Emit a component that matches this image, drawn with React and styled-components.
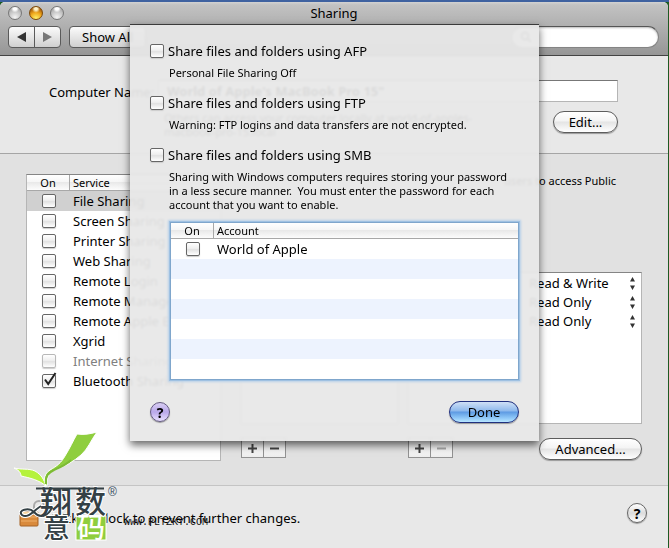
import React from 'react';
import styled, { createGlobalStyle, css } from 'styled-components';

const Global = createGlobalStyle`
  * { box-sizing: border-box; }
  body { margin: 0; background: #1d5a22; }
  body, button, input, select {
    font-family: "Lucida Grande", "Noto Sans", "Open Sans", sans-serif;
    font-size: 13px;
    color: #000;
  }
`;

const Desktop = styled.div`
  position: relative;
  min-height: 100vh;
  display: flex;
  border-top: 2px solid #3f62a0;
  padding-right: 1px;
  overflow: hidden;
`;

const Window = styled.main`
  position: relative;
  flex: 1;
  min-width: 0;
  display: flex;
  flex-direction: column;
  background: #e8e8e8;
  border-radius: 5px 5px 0 0;
  overflow: hidden;
`;

const Chrome = styled.header`
  background: linear-gradient(#d2d2d2, #c2c2c2 3px, #969696);
  border-bottom: 1px solid #434343;
  height: 54px;
`;

const TitleBar = styled.div`
  display: grid;
  grid-template-columns: 1fr auto 1fr;
  align-items: center;
  height: 22px;
  padding: 0 8px;
`;

const Title = styled.h1`
  margin: 0;
  font-size: 13px;
  line-height: 20px;
  font-weight: 400;
`;

const Lights = styled.div`
  display: flex;
  gap: 7px;
`;

const Light = styled.button`
  width: 14px;
  height: 14px;
  padding: 0;
  border: 1px solid ${p => (p.$amber ? '#7d4a08' : '#777')};
  border-radius: 50%;
  background: ${p => p.$amber
    ? 'radial-gradient(circle at 50% 15%, #fff3c8 0 12%, transparent 34%), radial-gradient(circle at 50% 95%, #fff36b, #f0a81c 45%, #8f4507 90%)'
    : 'radial-gradient(circle at 50% 12%, #fff 0 14%, transparent 34%), radial-gradient(circle at 50% 85%, #f4f4f4, #bdbdbd 60%, #8a8a8a)'};
`;

const Toolbar = styled.div`
  display: flex;
  align-items: center;
  padding: 2px 9px 0 8px;
  gap: 8px;
`;

const toolFace = css`
  height: 22px;
  border: 1px solid #5a5a5a;
  background: linear-gradient(#fbfbfb, #e6e6e6 50%, #d0d0d0);
`;

const NavGroup = styled.div`
  display: flex;
`;

const NavButton = styled.button`
  ${toolFace}
  width: 27px;
  padding: 0;
  display: flex;
  align-items: center;
  justify-content: center;
  border-radius: ${p => (p.$end ? '0 4px 4px 0' : '4px 0 0 4px')};
  margin-left: ${p => (p.$end ? '-1px' : '0')};
`;

const ToolButton = styled.button`
  ${toolFace}
  border-radius: 4px;
  padding: 0 12px;
  line-height: 18px;
`;

const SearchBox = styled.label`
  margin-left: auto;
  width: 148px;
  height: 22px;
  display: flex;
  align-items: center;
  gap: 4px;
  padding: 0 8px;
  border-radius: 11px;
  border: 1px solid #848484;
  border-top-color: #555;
  background: #fff;
  box-shadow: inset 0 1px 2px #bbb;
`;

const SearchInput = styled.input`
  min-width: 0;
  flex: 1;
  border: 0;
  background: transparent;
  outline: none;
`;

const NameSection = styled.section`
  display: grid;
  grid-template-columns: 104px 1fr;
  column-gap: 5px;
  padding: 24px 50px 14px 49px;
  border-bottom: 1px solid #a5a5a5;
`;

const NameLabel = styled.label`
  line-height: 24px;
  white-space: nowrap;
`;

const NameInput = styled.input`
  height: 22px;
  min-width: 0;
  padding: 0 8px;
  border: 1px solid #b5b5b5;
  border-top-color: #777;
  border-radius: 0;
  background: #fff;
  font-weight: 700;
`;

const NameHelp = styled.div`
  grid-column: 2;
  display: flex;
  justify-content: space-between;
  align-items: flex-start;
  padding-top: 7px;
  padding-left: 6px;
`;

const Note = styled.p`
  margin: 0;
  font-size: 11px;
  line-height: 14px;
  white-space: pre-wrap;
`;

const AccessNote = styled(Note)`
  text-align: right;
  padding-right: 26px;
`;

const Pill = styled.button`
  flex: none;
  height: 22px;
  min-width: ${p => p.$width || '65px'};
  padding: 0 8px;
  line-height: 18px;
  border-radius: 11px;
  border: 1px solid ${p => (p.$primary ? '#20307e' : '#5d5d5d')};
  box-shadow: 0 1px 1px #9a9a9a;
  background: ${p => p.$primary
    ? 'linear-gradient(#cfe0f6, #8db8ec 45%, #5d9ae3 50%, #8fc8f8 80%, #b8e6ff)'
    : 'linear-gradient(#fff, #f4f4f4 45%, #e4e4e4 50%, #fff)'};
`;

const ServiceSection = styled.section`
  display: grid;
  grid-template-columns: 195px 1fr;
  column-gap: 20px;
  padding: 20px 26px 24px;
  background: #e1e1e1;
  border-bottom: 1px solid #c4c4c4;
`;

const Panel = styled.div`
  background: #fff;
  border: 1px solid #b5b5b5;
  border-top-color: #858585;
  min-height: ${p => p.$height};
`;

const Table = styled.table`
  width: 100%;
  border-collapse: separate;
  border-spacing: 0;
  table-layout: fixed;
`;

const HeadCell = styled.th`
  height: 16px;
  padding: 0 0 0 ${p => (p.$narrow ? '0' : '3px')};
  width: ${p => (p.$narrow ? '43px' : 'auto')};
  font-size: 11px;
  line-height: 14px;
  font-weight: 400;
  text-align: ${p => (p.$narrow ? 'center' : 'left')};
  border-bottom: 1px solid #a8a8a8;
  border-right: ${p => (p.$narrow ? '1px solid #a8a8a8' : '0')};
  background: linear-gradient(#fff, #f6f6f6 45%, #e9e9e9 50%, #fcfcfc);
`;

const Row = styled.tr`
  height: 20px;
  background: ${p => (p.$selected ? '#d0d0d0' : p.$tint ? '#edf3fe' : '#fff')};
  color: ${p => (p.$dim ? '#808080' : '#000')};
`;

const Cell = styled.td`
  padding: 0 0 0 ${p => (p.$narrow ? '0' : '3px')};
  height: 20px;
  line-height: ${p => (p.$narrow ? '0' : '18px')};
  text-align: ${p => (p.$narrow ? 'center' : 'left')};
  white-space: nowrap;
`;

const CheckWrap = styled.span`
  display: inline-grid;
  vertical-align: middle;
  > * { grid-area: 1 / 1; }
  svg { pointer-events: none; overflow: visible; display: none; }
  input:checked + svg { display: block; }
`;

const Box = styled.input`
  appearance: none;
  display: block;
  width: 14px;
  height: 14px;
  margin: 0;
  border: 1px solid #666;
  border-radius: 2px;
  background: linear-gradient(#fff, #efefef 45%, #e2e2e2 55%, #fff);
  box-shadow: 0 1px 1px #ccc;
  &:disabled { border-color: #b8b8b8; }
`;

const Detail = styled.div`
  display: flex;
  flex-direction: column;
`;

const Lists = styled.div`
  display: grid;
  grid-template-columns: 157px 1fr;
  column-gap: 10px;
  row-gap: 14px;
  margin-top: 84px;
`;

const Access = styled.ul`
  list-style: none;
  margin: 0;
  padding: 1px 6px 0;
`;

const AccessRow = styled.li`
  display: flex;
  justify-content: flex-end;
  align-items: center;
  height: 19px;
`;

const AccessSelect = styled.select`
  appearance: none;
  width: 101px;
  height: 19px;
  padding: 0;
  border: 0;
  background: transparent;
  line-height: 17px;
`;

const Actions = styled.div`
  display: flex;
  justify-content: space-between;
  align-items: flex-start;
`;

const AddRemove = styled.div`
  display: flex;
`;

const Square = styled.button`
  width: 23px;
  height: 20px;
  padding: 0;
  display: flex;
  align-items: center;
  justify-content: center;
  border: 1px solid #929292;
  background: linear-gradient(#fff, #eee);
  & + & { margin-left: -1px; }
`;

const Footer = styled.footer`
  flex: 1;
  display: flex;
  align-items: flex-start;
  padding: 11px 21px 0 19px;
`;

const LockNote = styled.div`
  display: flex;
  gap: 4px;
  flex: 1;
  line-height: 18px;
  padding-top: 2px;
`;

const LockText = styled.span`
  padding-top: 10px;
`;

const Help = styled.button`
  width: 20px;
  height: 20px;
  margin-top: 6px;
  padding: 0;
  border-radius: 50%;
  border: 1px solid ${p => (p.$violet ? '#635a80' : '#666')};
  background: ${p => (p.$violet
    ? 'linear-gradient(#d8cdf2, #b9a8ea 50%, #e9e0ff)'
    : 'linear-gradient(#fff, #dcdcdc 50%, #fff)')};
  box-shadow: 0 1px 1px #999;
  font-size: 14px;
  line-height: 17px;
  font-weight: 700;
`;

const Sheet = styled.div`
  position: absolute;
  top: 22px;
  left: 0;
  right: 0;
  margin: 0 auto;
  width: 409px;
  max-width: 100%;
  padding: 17px 20px 18px;
  border-top: 1px solid #3a3a3a;
  background: rgba(232, 232, 232, 0.94);
  backdrop-filter: blur(1px);
  box-shadow: 0 4px 8px rgba(0, 0, 0, 0.6);
`;

const Option = styled.div`
  margin-bottom: 14px;
`;

const OptionLabel = styled.label`
  display: flex;
  align-items: center;
  gap: 4px;
  height: 18px;
  line-height: 18px;
`;

const OptionNote = styled(Note)`
  padding: 6px 0 0 19px;
`;

const AccountPanel = styled(Panel)`
  margin: -4px 0 0 20px;
  border-color: #7fa6cc;
  box-shadow: 0 0 0 1px #9fc1e2, 0 0 2px 2px #b7d0ea;
`;

const SheetFooter = styled.div`
  display: flex;
  justify-content: space-between;
  align-items: center;
  margin-top: 21px;
  ${Help} { margin-top: 0; }
`;

const Watermark = styled.div`
  position: absolute;
  left: 14px;
  bottom: 3px;
  width: 200px;
  height: 116px;
  pointer-events: none;
`;

const services = [
  ['File Sharing', { selected: true }],
  ['Screen Sharing', {}],
  ['Printer Sharing', {}],
  ['Web Sharing', {}],
  ['Remote Login', {}],
  ['Remote Management', {}],
  ['Remote Apple Events', {}],
  ['Xgrid', {}],
  ['Internet Sharing', { dim: true }],
  ['Bluetooth Sharing', { checked: true }],
];

const options = [
  ['Share files and folders using AFP', 'Personal File Sharing Off'],
  ['Share files and folders using FTP', 'Warning: FTP logins and data transfers are not encrypted.'],
  ['Share files and folders using SMB', 'Sharing with Windows computers requires storing your password\nin a less secure manner.  You must enter the password for each\naccount that you want to enable.'],
];

const Check = props => (
  <CheckWrap>
    <Box type="checkbox" {...props} />
    <svg width="14" height="14" viewBox="0 0 14 14" fill="none" stroke="#222" strokeWidth="2">
      <path d="M3 5.5 6.2 10 13.5 -1" />
    </svg>
  </CheckWrap>
);

const Updown = () => (
  <svg width="5" height="13" viewBox="0 0 5 13" fill="#333">
    <path d="M2.5 0 5 4.5H0ZM2.5 13 0 8.5H5Z" />
  </svg>
);

const PlusMinus = ({ name, dim }) => (
  <AddRemove>
    <Square aria-label={`Add ${name}`}>
      <svg width="9" height="9" stroke="#444" strokeWidth="2"><path d="M4.5 0V9M0 4.5H9" /></svg>
    </Square>
    <Square aria-label={`Remove ${name}`}>
      <svg width="9" height="9" stroke={dim ? '#aaa' : '#444'} strokeWidth="2"><path d="M0 4.5H9" /></svg>
    </Square>
  </AddRemove>
);

const Lock = () => (
  <svg width="27" height="29" viewBox="0 0 27 29">
    <path d="M15 13V7a5 5 0 0 1 10 0v2" fill="none" stroke="#aaa" strokeWidth="2" />
    <rect x="1" y="13" width="18" height="14" rx="1" fill="#d98a3c" stroke="#a66325" />
    <path d="M2 18H18M2 22H18" stroke="#efb06a" />
    <path d="M1 14H19" stroke="#f8d5a0" strokeWidth="2" />
  </svg>
);

const Brand = () => (
  <svg width="200" height="116" viewBox="14 429 200 116">
    <g stroke="#fff" strokeWidth="1">
      <path d="M45 486C44 479 44 474 50 470C57 466 61 463 65 456C70 448 73 441 77 434C84 435 90 434 97 432C91 440 88 449 81 455C74 461 66 466 57 469C49 472 47 475 47 486Z" fill="#8fce3e" />
      <path d="M14 468C22 470 28 468 35 471C42 475 44 480 46 486C39 480 30 478 21 476C21 472 18 470 14 468Z" fill="#b5f23c" />
    </g>
    <path d="M46 484C45 476 48 473 54 470C61 467 66 465 71 460" fill="none" stroke="#7dbb35" strokeWidth="2" />
    <rect x="76" y="516" width="30" height="24" fill="#8fce3e" stroke="#fff" />
    <path d="M41 506C33 511 28 519 22 515C17 510 29 507 34 512C40 519 49 516 52 507" fill="none" stroke="#fff" strokeWidth="4" />
    <g fontFamily="'Noto Sans CJK SC', sans-serif" fontWeight="500" fill="#344045" stroke="#fff" strokeWidth="2" paintOrder="stroke">
      <text x="40" y="514" fontSize="32">翔</text>
      <text x="75" y="513" fontSize="31">数</text>
      <text x="43" y="538" fontSize="27">意</text>
      <text x="77" y="538" fontSize="28" fill="#fff" stroke="none">码</text>
    </g>
    <path d="M36 488.500H104" stroke="#344045" strokeWidth="2" />
    <path d="M41 506C33 511 28 519 22 515C17 510 29 507 34 512C40 519 49 516 52 507" fill="none" stroke="#344045" strokeWidth="2" />
    <text x="108" y="496" fontFamily="'Liberation Sans', sans-serif" fontSize="12" fill="#344a60">®</text>
    <text x="124" y="525" fontFamily="'Liberation Mono', monospace" fontSize="10" fill="#111">www.PLTZKY.COM</text>
  </svg>
);

export default function App() {
  return (
    <Desktop>
      <Global />
      <Window>
        <Chrome>
          <TitleBar>
            <Lights>
              <Light aria-label="Close" />
              <Light aria-label="Minimize" $amber />
              <Light aria-label="Zoom" />
            </Lights>
            <Title>Sharing</Title>
          </TitleBar>
          <Toolbar>
            <NavGroup>
              <NavButton aria-label="Back">
                <svg width="9" height="10" fill="#333"><path d="M9 0V10L0 5Z" /></svg>
              </NavButton>
              <NavButton aria-label="Forward" $end>
                <svg width="9" height="10" fill="#777"><path d="M0 0V10L9 5Z" /></svg>
              </NavButton>
            </NavGroup>
            <ToolButton>Show All</ToolButton>
            <SearchBox>
              <svg width="12" height="12" fill="none" stroke="#666" strokeWidth="2"><circle cx="5" cy="5" r="3.5" /><path d="m8 8 3 3" /></svg>
              <SearchInput type="search" aria-label="Search" />
            </SearchBox>
          </Toolbar>
        </Chrome>

        <NameSection>
          <NameLabel htmlFor="computer-name">Computer Name:</NameLabel>
          <NameInput id="computer-name" defaultValue={'World of Apple\'s MacBook Pro 15"'} />
          <NameHelp>
            <Note>{'Others can access your computer locally at world-of-apples-\nmacbook-pro-15.local'}</Note>
            <Pill>Edit...</Pill>
          </NameHelp>
        </NameSection>

        <ServiceSection>
          <Panel $height="287px">
            <Table>
              <thead>
                <tr><HeadCell $narrow>On</HeadCell><HeadCell>Service</HeadCell></tr>
              </thead>
              <tbody>
                {services.map(([name, s]) => (
                  <Row key={name} $selected={s.selected} $dim={s.dim}>
                    <Cell $narrow><Check aria-label={name} disabled={s.dim} defaultChecked={s.checked} /></Cell>
                    <Cell>{name}</Cell>
                  </Row>
                ))}
              </tbody>
            </Table>
          </Panel>
          <Detail>
            <AccessNote>users to access Public</AccessNote>
            <Lists>
              <Panel $height="152px" />
              <Panel $height="152px">
                <Access>
                  {['Read & Write', 'Read Only', 'Read Only'].map((v, i) => (
                    <AccessRow key={i}>
                      <AccessSelect aria-label={`Access level ${i + 1}`} defaultValue={v}>
                        <option>{v}</option>
                      </AccessSelect>
                      <Updown />
                    </AccessRow>
                  ))}
                </Access>
              </Panel>
              <PlusMinus name="folder" />
              <Actions>
                <PlusMinus name="user" dim />
                <Pill $width="103px">Advanced...</Pill>
              </Actions>
            </Lists>
          </Detail>
        </ServiceSection>

        <Footer>
          <LockNote>
            <Lock />
            <LockText>Click the lock to prevent further changes.</LockText>
          </LockNote>
          <Help aria-label="Help">?</Help>
        </Footer>

        <Watermark><Brand /></Watermark>
      </Window>

      <Sheet role="dialog" aria-label="File sharing options">
        {options.map(([label, note]) => (
          <Option key={label}>
            <OptionLabel><Check />{label}</OptionLabel>
            <OptionNote>{note}</OptionNote>
          </Option>
        ))}
        <AccountPanel $height="158px">
          <Table>
            <thead>
              <tr><HeadCell $narrow>On</HeadCell><HeadCell>Account</HeadCell></tr>
            </thead>
            <tbody>
              {['World of Apple', '', '', '', '', '', ''].map((name, i) => (
                <Row key={i} $tint={i % 2 === 1}>
                  <Cell $narrow>{name && <Check aria-label={name} />}</Cell>
                  <Cell>{name}</Cell>
                </Row>
              ))}
            </tbody>
          </Table>
        </AccountPanel>
        <SheetFooter>
          <Help $violet aria-label="Help with file sharing">?</Help>
          <Pill $primary $width="70px">Done</Pill>
        </SheetFooter>
      </Sheet>
    </Desktop>
  );
}
